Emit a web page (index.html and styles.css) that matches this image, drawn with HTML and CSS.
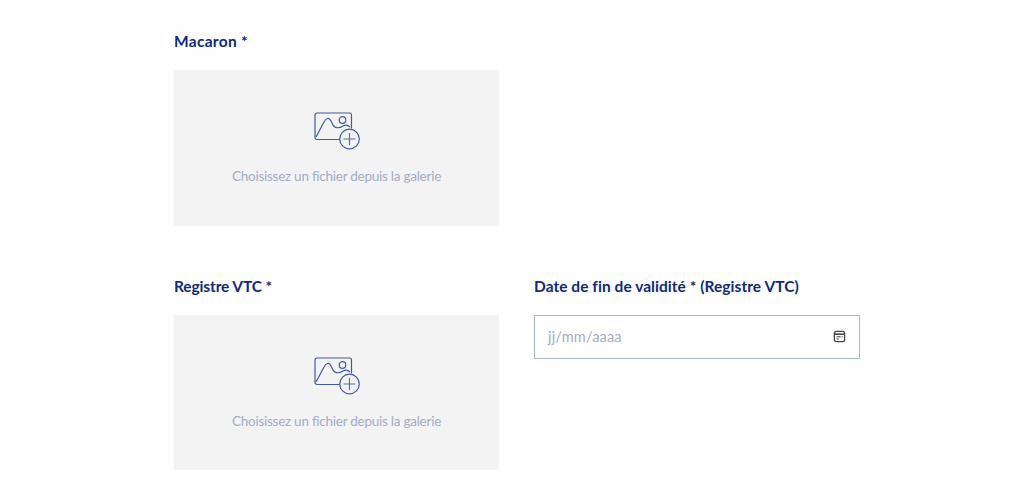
FILE: index.html
```html
<!DOCTYPE html>
<html lang="fr">
<head>
<meta charset="utf-8">
<title>Documents</title>
<link rel="stylesheet" href="styles.css">
</head>
<body>
<main class="form">
  <div class="field">
    <label class="label label-wide">Macaron *</label>
    <div class="drop">
      <svg class="drop-icon" viewBox="0 0 46 38" fill="none"><path d="M26 27.500H3a2 2 0 0 1-2-2V3a2 2 0 0 1 2-2h32.500a2 2 0 0 1 2 2v13.500"/><path d="M2 25L10 10C12 6 15 5 17 9L19 13C21 17 26 16 29 14C31 13 34 13 36 15"/><circle cx="28.500" cy="8" r="3.300"/><circle cx="35.500" cy="27" r="9.800"/><path class="plus" d="M35.500 21v12M29.500 27h12"/></svg>
      <span class="drop-text">Choisissez un fichier depuis la galerie</span>
    </div>
  </div>
  <div class="field"></div>
  <div class="field">
    <label class="label label-tight">Registre VTC *</label>
    <div class="drop">
      <svg class="drop-icon" viewBox="0 0 46 38" fill="none"><path d="M26 27.500H3a2 2 0 0 1-2-2V3a2 2 0 0 1 2-2h32.500a2 2 0 0 1 2 2v13.500"/><path d="M2 25L10 10C12 6 15 5 17 9L19 13C21 17 26 16 29 14C31 13 34 13 36 15"/><circle cx="28.500" cy="8" r="3.300"/><circle cx="35.500" cy="27" r="9.800"/><path class="plus" d="M35.500 21v12M29.500 27h12"/></svg>
      <span class="drop-text">Choisissez un fichier depuis la galerie</span>
    </div>
  </div>
  <div class="field">
    <label class="label">Date de fin de validité * (Registre VTC)</label>
    <div class="date">
      <span class="date-text">jj/mm/aaaa</span>
      <svg class="cal" viewBox="0 0 14 14" fill="none"><rect x="1.500" y="1.500" width="11" height="11" rx="2"/><path class="cal-head" d="M1.500 4.500h11"/><path class="cal-dots" d="M3.800 7.200h4.400M3.800 9.700h2.400M9.200 7.200h1.300"/></svg>
    </div>
  </div>
</main>
</body>
</html>
```
FILE: styles.css
```css
html, body {
  margin: 0;
  height: 100%;
  background: #fefefe;
  overflow: hidden;
}

body {
  font-family: "Lato", "Liberation Sans", sans-serif;
}

.form {
  width: 686px;
  margin-left: 174px;
  padding-top: 32px;
  display: grid;
  grid-template-columns: 325px 326px;
  column-gap: 35px;
  row-gap: 51px;
}

.field {
  display: flex;
  flex-direction: column;
  gap: 19px;
}

.label {
  font-size: 15.500px;
  line-height: 19px;
  font-weight: 700;
  letter-spacing: 0.05px;
  color: #0e2a78;
}

.label-wide {
  letter-spacing: 0.3px;
}

.label-tight {
  letter-spacing: -0.13px;
}

.drop {
  height: 155.500px;
  background: #f3f3f3;
  display: flex;
  flex-direction: column;
  align-items: center;
  padding-top: 42px;
  box-sizing: border-box;
}

.drop-icon {
  width: 46px;
  height: 38px;
  stroke: #3f5a9e;
  stroke-width: 1.200;
}

.drop-icon .plus {
  stroke: #4f73b5;
}

.drop-text {
  margin-top: 17px;
  font-size: 13.500px;
  line-height: 18px;
  letter-spacing: -0.25px;
  color: #a3acc9;
}

.date {
  height: 44px;
  box-sizing: border-box;
  border: 1px solid #a9b6d3;
  display: flex;
  align-items: center;
  justify-content: space-between;
  padding: 0 13px;
}

.date-text {
  font-size: 14.500px;
  letter-spacing: 0.2px;
  color: #a3acc9;
}

.cal {
  width: 13px;
  height: 13px;
  stroke: #444;
  stroke-width: 1.400;
}

.cal-head {
  stroke-width: 1.700;
}

.cal-dots {
  stroke-width: 1.100;
}
```
